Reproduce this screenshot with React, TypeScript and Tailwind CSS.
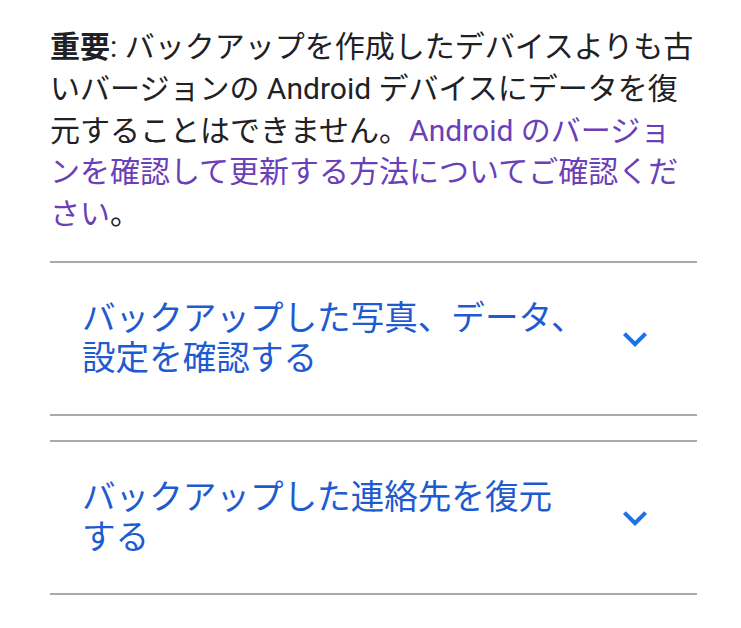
const font = { fontFamily: 'Roboto, "Noto Sans CJK JP", sans-serif' };

interface AccordionProps {
  title: React.ReactNode;
}

const ExpandIcon = () => (
  <svg width="48" height="48" viewBox="0 0 24 24" className="shrink-0" aria-hidden="true">
    <path d="M16.59 8.59L12 13.17 7.41 8.59 6 10l6 6 6-6z" fill="#1a73e8" />
  </svg>
);

const Accordion: React.FC<AccordionProps> = ({ title }) => {
  return (
    <div className="border-y-2 border-[#aaaaaa] pt-[36px] pb-[35px] pl-[32px] pr-[38px] flex items-center gap-[24px]">
      <h2 className="w-[505px] text-[33.6px] leading-[40px] text-[#1f5bd0] font-normal">{title}</h2>
      <ExpandIcon />
    </div>
  );
};

export default function App() {
  return (
    <div className="w-[741px] min-h-[628px] bg-white px-[44px] pt-[26px]" style={font}>
      <div className="w-[647px] ml-[6px]">
        <p className="text-[30px] leading-[41.75px] text-[#202124]">
          <b className="font-bold">重要</b>: バックアップを作成したデバイスよりも古いバージョンの Android デバイスにデータを復元することはできません。
          <a href="#" className="text-[#6a3fb8]">Android のバージョンを確認して更新する方法についてご確認ください</a>。
        </p>
        <div className="mt-[26px] flex flex-col gap-[24px]">
          <Accordion title="バックアップした写真、データ、設定を確認する" />
          <Accordion
            title={
              <>
                バックアップした連絡先を復元
                <br />
                する
              </>
            }
          />
        </div>
      </div>
    </div>
  );
}
